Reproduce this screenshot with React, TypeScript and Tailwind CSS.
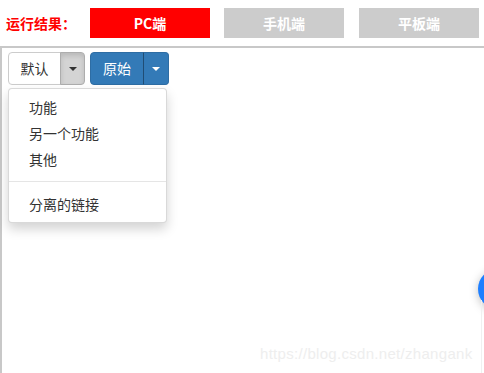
import React from 'react';

const cjk = { fontFamily: '"Microsoft YaHei", "Noto Sans CJK SC", "Liberation Sans", sans-serif' };

const Caret = ({ color }: { color: string }) => (
  <span
    className="inline-block w-0 h-0 border-x-4 border-x-transparent border-t-4"
    style={{ borderTopColor: color }}
  />
);

const items = ['功能', '另一个功能', '其他'];

export default function App() {
  return (
    <div className="relative w-[484px] h-[373px] bg-white overflow-hidden" style={cjk}>
      {/* result switcher */}
      <div className="flex items-center h-[46px] pl-[6px]">
        <span className="text-[14px] font-bold text-[#ff0000] w-[84px]">运行结果：</span>
        <div className="flex gap-[14px]">
          <div className="w-[120px] h-[30px] bg-[#ff0000] text-white text-[14px] font-bold flex items-center justify-center">
            PC端
          </div>
          <div className="w-[120px] h-[30px] bg-[#cccccc] text-white text-[14px] font-bold flex items-center justify-center">
            手机端
          </div>
          <div className="w-[120px] h-[30px] bg-[#cccccc] text-white text-[14px] font-bold flex items-center justify-center ml-px">
            平板端
          </div>
        </div>
      </div>

      {/* preview frame */}
      <div className="h-[327px] border-t-2 border-l-2 border-[#c8c8c8] pl-[6px] pt-[4px]">
        <div className="flex gap-[5px]">
          <div className="relative flex">
            <div className="h-[33px] w-[53px] flex items-center justify-center border border-[#cccccc] rounded-l-[4px] text-[14px] text-[#333333] bg-white">
              默认
            </div>
            <div className="h-[33px] w-[25px] -ml-px flex items-center justify-center border border-[#adadad] rounded-r-[4px] bg-[#d4d4d4] shadow-[inset_0_3px_5px_rgba(0,0,0,0.125)]">
              <Caret color="#333333" />
            </div>

            <div className="absolute left-0 top-[36px] w-[159px] py-[5px] bg-white border border-[rgba(0,0,0,0.15)] rounded-[4px] shadow-[0_6px_12px_rgba(0,0,0,0.175)] z-10">
              {items.map((t) => (
                <div key={t} className="px-[20px] py-[3px] leading-[20px] text-[14px] text-[#333333]">
                  {t}
                </div>
              ))}
              <div className="h-px my-[9px] bg-[#e5e5e5]" />
              <div className="px-[20px] py-[3px] leading-[20px] text-[14px] text-[#333333]">分离的链接</div>
            </div>
          </div>

          <div className="flex">
            <div className="h-[33px] w-[54px] flex items-center justify-center border border-[#2e6da4] rounded-l-[4px] bg-[#337ab7] text-[14px] text-white">
              原始
            </div>
            <div className="h-[33px] w-[26px] -ml-px flex items-center justify-center border border-[#2e6da4] border-l-[#204d74] rounded-r-[4px] bg-[#337ab7]">
              <Caret color="#ffffff" />
            </div>
          </div>
        </div>
      </div>

      {/* floating button peeking from the right */}
      <div className="absolute left-[478px] top-[269px] w-[40px] h-[40px] rounded-full bg-[#1e7fff] shadow-[0_2px_10px_rgba(0,0,0,0.25)]" />
      <div className="absolute left-[481px] top-[300px] w-px h-[73px] bg-[#f0f0f0]" />

      {/* watermark */}
      <div
        className="absolute left-[260px] top-[343px] text-[15px] text-[#eeeeee] tracking-[0.3px]"
        style={{ fontFamily: '"Liberation Sans", Arial, sans-serif' }}
      >
        https://blog.csdn.net/zhangank
      </div>
    </div>
  );
}
